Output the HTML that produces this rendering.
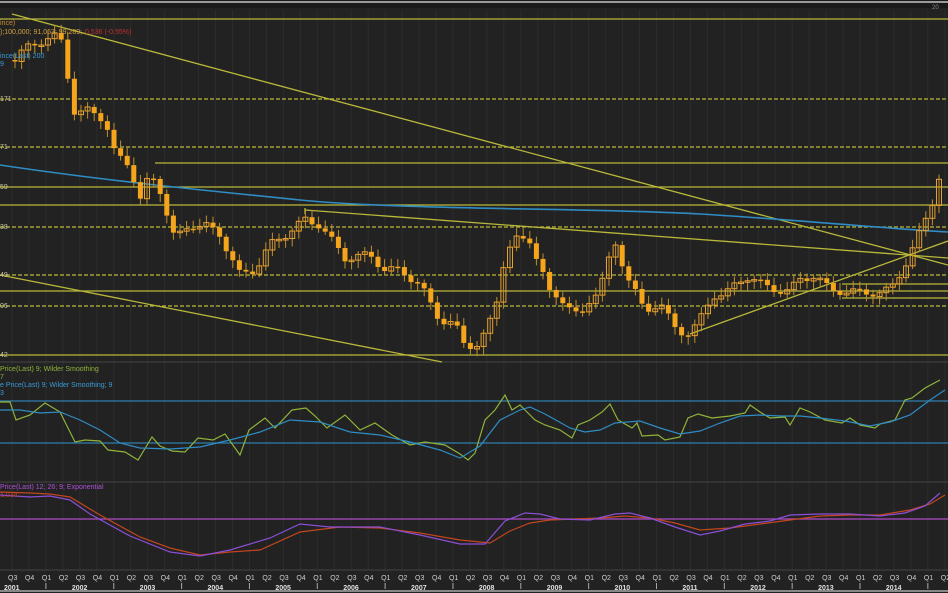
<!DOCTYPE html>
<html><head><meta charset="utf-8"><style>
html,body{margin:0;padding:0;background:#202020;width:948px;height:593px;overflow:hidden}
svg{display:block}
text{font-family:"Liberation Sans",sans-serif}
</style></head><body>
<svg id="s" width="948" height="593" xmlns="http://www.w3.org/2000/svg">
<rect width="948" height="593" fill="#222222"/>
<rect width="948" height="8" fill="#1a1a1a"/>
<line x1="0" y1="2" x2="948" y2="2" stroke="#9a9a9a" stroke-width="2"/>
<g id="grid"></g>
<line x1="0" y1="362" x2="948" y2="362" stroke="#444" stroke-width="1"/>
<line x1="0" y1="482" x2="948" y2="482" stroke="#444" stroke-width="1"/>
<line x1="0" y1="570" x2="948" y2="570" stroke="#444" stroke-width="1"/>
<line x1="0" y1="591" x2="948" y2="591" stroke="#888" stroke-width="2"/>
<g stroke="#b9b83a" stroke-width="1.3" fill="none">
<line x1="0" y1="19" x2="948" y2="19"/>
<line x1="0" y1="99" x2="948" y2="99" stroke-dasharray="4,2"/>
<line x1="0" y1="147" x2="948" y2="147" stroke-dasharray="4,2"/>
<line x1="155" y1="163" x2="948" y2="163"/>
<line x1="0" y1="187" x2="948" y2="187"/>
<line x1="0" y1="205" x2="948" y2="205"/>
<line x1="0" y1="227" x2="948" y2="227" stroke-dasharray="4,2"/>
<line x1="0" y1="275" x2="948" y2="275" stroke-dasharray="4,2"/>
<line x1="0" y1="291" x2="948" y2="291"/>
<line x1="0" y1="306" x2="948" y2="306" stroke-dasharray="4,2"/>
<line x1="0" y1="355" x2="948" y2="355"/>
<line x1="842" y1="284" x2="948" y2="284"/>
<line x1="842" y1="298" x2="948" y2="298"/>
<line x1="12" y1="14" x2="948" y2="265"/>
<line x1="0" y1="275" x2="442" y2="362"/>
<line x1="305" y1="210" x2="948" y2="258"/>
<line x1="690" y1="334" x2="948" y2="241"/>
<line x1="305" y1="208" x2="305" y2="214"/>
</g>
<path d="M0,165 C100,180 200,190 300,200 S600,208 700,214 S880,228 948,232" stroke="#2f8cc4" stroke-width="1.6" fill="none"/>
<g id="candles"></g>
<line x1="0" y1="401" x2="948" y2="401" stroke="#2f7fb0" stroke-width="1.3"/>
<line x1="0" y1="443" x2="948" y2="443" stroke="#2f7fb0" stroke-width="1.3"/>
<polyline fill="none" stroke="#8fb33a" stroke-width="1.2" points="0,402 10,402 16,420 30,415 45,403 60,412 75,442 85,440 100,441 108,450 125,452 138,460 152,437 160,446 172,451 185,452 198,438 213,440 225,434 240,455 249,430 265,418 275,428 292,410 306,408 315,416 327,428 345,415 360,430 375,423 392,435 410,445 425,442 445,445 460,454 468,460 475,453 485,420 495,410 505,395 512,410 520,405 535,420 545,425 560,430 572,438 578,425 590,420 602,412 610,404 618,420 632,428 637,423 642,436 658,435 665,440 680,437 688,418 698,414 712,418 730,416 745,413 750,405 760,412 770,418 785,417 790,425 800,408 810,412 825,420 842,423 850,418 860,425 875,428 880,424 895,420 905,400 912,398 925,388 940,380"/>
<polyline fill="none" stroke="#2f8cc4" stroke-width="1.2" points="0,410 20,410 40,413 60,412 80,420 100,430 120,443 140,448 170,449 200,447 230,440 260,432 290,420 320,422 350,432 380,435 410,442 440,450 460,458 480,446 500,420 520,410 530,407 545,414 570,428 585,432 600,430 615,423 640,421 660,428 680,434 700,431 720,423 740,416 760,415 780,416 800,416 820,418 845,421 870,426 890,422 910,415 930,400 945,390"/>
<line x1="0" y1="519" x2="948" y2="519" stroke="#b04bc8" stroke-width="1.3"/>
<polyline fill="none" stroke="#c2461e" stroke-width="1.2" points="0,492 30,493 50,494 70,497 100,515 140,537 170,548 200,555 230,552 260,550 300,532 340,527 380,528 420,533 460,540 490,543 510,531 530,523 550,520 575,519 600,518 625,516 650,518 675,523 700,530 730,528 760,524 790,520 820,516 850,515 880,515 910,510 930,504 945,495"/>
<polyline fill="none" stroke="#8a4fd6" stroke-width="1.2" points="0,495 30,497 50,496 70,500 90,514 130,536 170,552 200,556 230,550 270,538 300,524 330,527 380,527 420,535 460,544 485,544 505,521 525,513 540,514 560,519 590,520 615,514 630,513 650,518 675,527 700,535 720,531 745,524 770,521 790,515 820,514 850,514 880,516 905,513 925,506 940,493"/>
<g font-size="7" fill="#c8c8a0">
<text x="0" y="101">171</text><text x="0" y="149">71</text><text x="0" y="189">59</text><text x="0" y="229">38</text><text x="0" y="277">49</text><text x="0" y="308">06</text><text x="0" y="357">42</text>
<text x="0" y="25" fill="#c88a30">ince)</text>
<text x="0" y="34" fill="#d0a040">);100,000; 91,063; 99,289;</text>
<text x="85" y="34" fill="#c03030">0,536 (-0,55%)</text>
<text x="0" y="58" fill="#3a9ad8">ince(Last)  200</text>
<text x="0" y="66" fill="#3a9ad8">9</text>
<text x="0" y="371" fill="#8fb33a">Price(Last)  9; Wilder Smoothing</text>
<text x="0" y="379" fill="#8fb33a">7</text>
<text x="0" y="387" fill="#3a9ad8">e Price(Last)  9; Wilder Smoothing; 9</text>
<text x="0" y="395" fill="#3a9ad8">3</text>
<text x="0" y="489" fill="#b050d8">Price(Last)  12; 26; 9; Exponential</text>
<text x="0" y="497" fill="#c2461e">1,034</text>
<text x="932" y="9" fill="#888" font-size="6">20</text>
</g>
<g id="axis" font-size="7" fill="#cfcfcf"></g>
</svg>
<script>
(function(){
var NS="http://www.w3.org/2000/svg";
function el(t,a,p){var e=document.createElementNS(NS,t);for(var k in a)e.setAttribute(k,a[k]);p.appendChild(e);return e;}
var grid=document.getElementById('grid'),axis=document.getElementById('axis');
var q=['Q3','Q4','Q1','Q2'];
for(var i=0;i<56;i++){var x=12+i*16.96;
 el('line',{x1:x,y1:10,x2:x,y2:570,stroke:'#2c2c2c','stroke-width':1},grid);
 var t=el('text',{x:x-4,y:580},axis);t.textContent=q[i%4];
 if(i%4==0){var yy=el('text',{x:x-8,y:590,'font-weight':'bold',fill:'#e0e0e0'},axis);yy.textContent=2001+i/4;}
 if(i%4==2){el('line',{x1:x,y1:583,x2:x,y2:589,stroke:'#aaa'},axis);}
}
var P=[[15,60],[30,45],[60,35],[65,60],[75,115],[90,110],[105,120],[115,155],[130,165],[140,200],[150,175],[160,190],[175,240],[190,225],[205,225],[220,235],[240,275],[255,270],[270,245],[285,235],[305,220],[320,225],[335,245],[345,258],[370,255],[385,270],[400,270],[420,285],[440,320],[455,325],[465,345],[480,345],[495,310],[505,255],[515,240],[530,240],[540,265],[550,295],[565,300],[580,320],[590,300],[600,285],[615,245],[625,270],[635,290],[645,315],[660,300],[675,330],[685,335],[700,320],[715,295],[730,290],[750,275],[770,290],[790,290],[800,280],[815,275],[830,290],[850,292],[880,293],[890,290],[905,265],[915,245],[925,220],[935,195],[942,165]];
function f(x){for(var i=1;i<P.length;i++)if(x<=P[i][0]){var a=P[i-1],b=P[i];return a[1]+(b[1]-a[1])*(x-a[0])/(b[0]-a[0]);}return P[P.length-1][1];}
var c=document.getElementById('candles');var prev=f(15);
for(var x=15;x<=942;x+=6.6){var cl=f(x)+Math.sin(x*1.7)*4;var o=prev;var tp=Math.min(o,cl),bt=Math.max(o,cl);if(bt-tp<1.5)bt=tp+1.5;
 el('line',{x1:x,y1:tp-3-Math.abs(Math.sin(x))*5,x2:x,y2:bt+3+Math.abs(Math.cos(x))*5,stroke:'#c0902a','stroke-width':1},c);
 if(cl>o)el('rect',{x:x-2.5,y:tp,width:5,height:bt-tp,fill:'#f5a51c'},c);
 else el('rect',{x:x-2.5,y:tp,width:5,height:bt-tp,fill:'none',stroke:'#e8a030','stroke-width':1},c);
 prev=cl;}
})();
</script>
</body></html>
